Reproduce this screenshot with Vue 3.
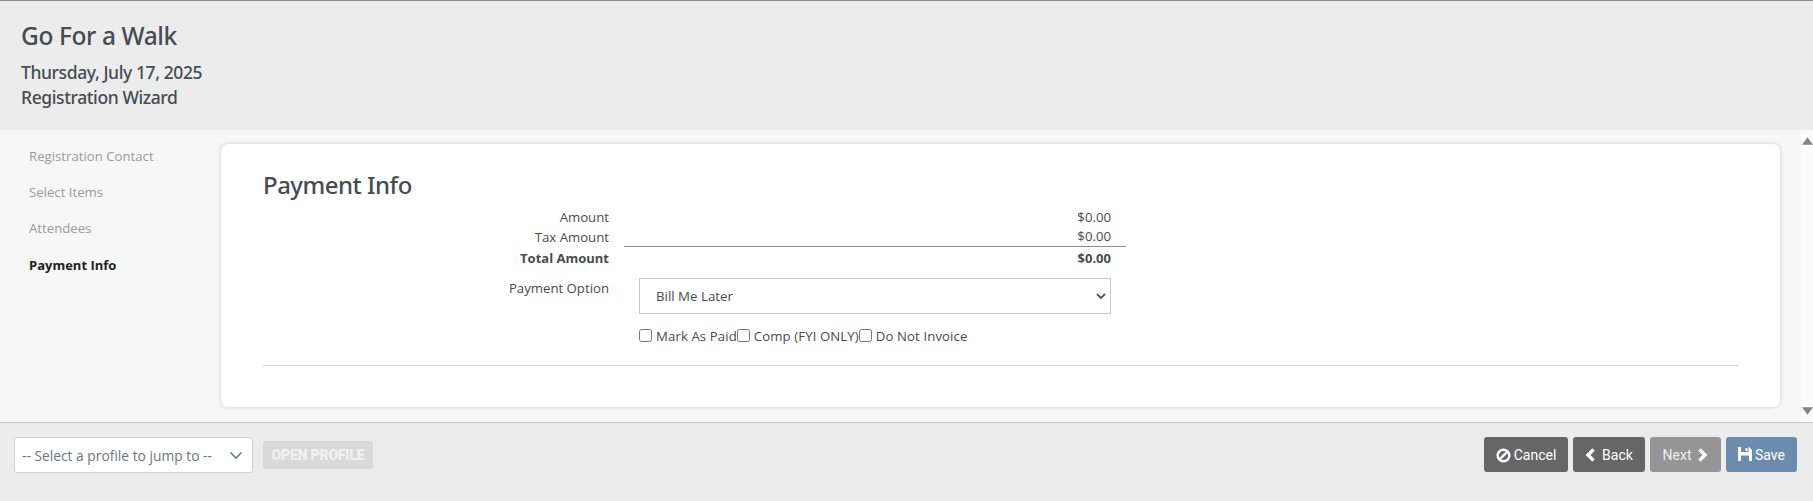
<script setup>
const steps = [
  { label: 'Registration Contact', active: false },
  { label: 'Select Items', active: false },
  { label: 'Attendees', active: false },
  { label: 'Payment Info', active: true }
]
const amounts = [
  { label: 'Amount', value: '$0.00' },
  { label: 'Tax Amount', value: '$0.00', ruled: true },
  { label: 'Total Amount', value: '$0.00', total: true }
]
const checks = ['Mark As Paid', 'Comp (FYI ONLY)', 'Do Not Invoice']
</script>

<template>
  <div class="page">
    <header class="head">
      <h1>Go For a Walk</h1>
      <h2>Thursday, July 17, 2025</h2>
      <h2>Registration Wizard</h2>
    </header>
    <div class="middle">
      <nav class="steps">
        <div v-for="s in steps" :key="s.label" class="step" :class="{ active: s.active }">{{ s.label }}</div>
      </nav>
      <main class="card">
        <h3>Payment Info</h3>
        <div v-for="a in amounts" :key="a.label" class="row" :class="{ total: a.total }">
          <div class="lab">{{ a.label }}</div>
          <div class="val" :class="{ ruled: a.ruled }">{{ a.value }}</div>
        </div>
        <div class="row option">
          <div class="lab">Payment Option</div>
          <div class="fake-wrap">
            <select class="pay"><option>Bill Me Later</option></select>
          </div>
        </div>
        <div class="row checks-row">
          <div class="lab"></div>
          <div class="checks">
            <label v-for="c in checks" :key="c"><input type="checkbox" /><span>{{ c }}</span></label>
          </div>
        </div>
        <hr />
      </main>
      <div class="scroll">
        <svg width="11" height="8" viewBox="0 0 10 7"><path d="M5 0l5 7H0z" fill="#848484" /></svg>
        <svg width="11" height="8" viewBox="0 0 10 7"><path d="M0 0h10L5 7z" fill="#848484" /></svg>
      </div>
    </div>
    <footer class="foot">
      <div class="jump">
        <div class="jump-sel">
          <span>-- Select a profile to jump to --</span>
          <svg width="14" height="9" viewBox="0 0 14 9"><path d="M1.500 1.500L7 7l5.500-5.500" fill="none" stroke="#5c6670" stroke-width="1.300" /></svg>
        </div>
        <button class="open">OPEN PROFILE</button>
      </div>
      <div class="actions">
        <button class="btn dark">
          <svg width="15" height="15" viewBox="0 0 16 16"><circle cx="8" cy="8" r="6.200" fill="none" stroke="#fff" stroke-width="2.600" /><path d="M3.800 12.200L12.200 3.800" stroke="#fff" stroke-width="2.600" /></svg>
          <span>Cancel</span>
        </button>
        <button class="btn dark">
          <svg width="11" height="14" viewBox="0 0 11 14"><path d="M8.500 1.500L3 7l5.500 5.500" fill="none" stroke="#fff" stroke-width="3.400" /></svg>
          <span>Back</span>
        </button>
        <button class="btn grey">
          <span>Next</span>
          <svg width="11" height="14" viewBox="0 0 11 14"><path d="M2.500 1.500L8 7l-5.500 5.500" fill="none" stroke="#fff" stroke-width="3.400" /></svg>
        </button>
        <button class="btn blue">
          <svg class="disk" width="14" height="14" viewBox="0 0 14 14"><path fill-rule="evenodd" d="M0 0h11l3 3v11H0zM3 0v5h7.500V0zM7.500 1h2v3h-2zM3 8.500V14h8V8.500z" fill="#fff" /></svg>
          <span>Save</span>
        </button>
      </div>
    </footer>
  </div>
</template>

<style>
html, body { margin: 0; background: #ececec; }
</style>

<style scoped>
.page {
  width: 1813px;
  height: 501px;
  display: flex;
  flex-direction: column;
  font-family: "Open Sans", "Noto Sans", sans-serif;
  color: #454c53;
  overflow: hidden;
}
.head {
  height: 129px;
  flex: none;
  background: #ececec;
  border-top: 1px solid #8a8a8a;
  padding: 0 21px;
}
h1 {
  margin: 18px 0 0;
  font-family: "Noto Sans", sans-serif;
  font-size: 24.500px;
  line-height: 34px;
  font-weight: 500;
  letter-spacing: -0.4px;
}
h2 {
  margin: 0;
  font-family: "Noto Sans", sans-serif;
  font-size: 17.500px;
  line-height: 25px;
  font-weight: 500;
  letter-spacing: -0.4px;
}
h1 + h2 { margin-top: 7px; }
.middle {
  height: 292px;
  flex: none;
  display: flex;
  background: #f7f7f7;
}
.steps {
  width: 221px;
  flex: none;
  padding: 8px 0 0 29px;
  box-sizing: border-box;
}
.step {
  height: 36.200px;
  line-height: 36px;
  font-size: 13.200px;
  color: #9a9a9a;
}
.step.active { color: #222; font-weight: 700; font-size: 13px; }
.card {
  width: 1559px;
  height: 263px;
  margin-top: 14px;
  flex: none;
  background: #fff;
  border-radius: 7px;
  box-shadow: 0 0 4px rgba(0, 0, 0, .18);
  padding: 25px 42px 0 42px;
  box-sizing: border-box;
}
h3 {
  margin: 0 0 6px;
  font-family: "Noto Sans", sans-serif;
  font-size: 24px;
  line-height: 32px;
  font-weight: 500;
  letter-spacing: -0.5px;
}
.row {
  display: grid;
  grid-template-columns: 346px 502px;
  column-gap: 15px;
  font-size: 13.200px;
  line-height: 20px;
}
.lab { text-align: right; }
.val { text-align: right; padding-right: 15px; }
.ruled { border-bottom: 1px solid #8f8f8f; height: 20px; line-height: 19px; box-sizing: border-box; }
.total { font-weight: 700; font-size: 13px; margin-top: 1px; }
.option { margin-top: 10px; }
.fake-wrap { padding-left: 15px; }
.pay {
  display: block;
  width: 472px;
  height: 36px;
  border: 1px solid #c9c9c9;
  color: #454c53;
  font: 13.300px "Open Sans", sans-serif;
  padding: 0 16px;
  border-radius: 0;
  appearance: none;
  background: #fff url("data:image/svg+xml,%3Csvg xmlns='http://www.w3.org/2000/svg' width='10' height='6' viewBox='0 0 10 6'%3E%3Cpath d='M1 1l4 4 4-4' fill='none' stroke='%23555' stroke-width='1.800'/%3E%3C/svg%3E") no-repeat right 4px center;
}
.checks-row { margin-top: 12px; }
.checks { display: flex; padding-left: 15px; letter-spacing: 0.1px; }
.checks label { display: flex; align-items: center; }
.checks input { margin: -2px 4px 0 0; width: 13px; height: 13px; }
hr {
  border: 0;
  border-top: 1px solid #d2d2d2;
  margin: 19px 0 0;
}
.scroll {
  width: 12px;
  margin-left: auto;
  background: #fbfbfb;
  display: flex;
  flex-direction: column;
  justify-content: space-between;
  align-items: center;
  padding: 7px 0 7px;
  box-sizing: border-box;
}
.foot {
  flex: 1;
  background: #ececec;
  border-top: 1px solid #c4c4c4;
  display: flex;
  justify-content: space-between;
  align-items: flex-start;
  padding: 14px 16px 0 14px;
}
.jump { display: flex; align-items: center; gap: 10px; }
.jump-sel {
  width: 239px;
  height: 36px;
  box-sizing: border-box;
  border: 1px solid #ced4da;
  border-radius: 3px;
  background: #fff;
  display: flex;
  align-items: center;
  justify-content: space-between;
  padding: 0 9px 0 7px;
  font-size: 13.800px;
  color: #6c757d;
}
.open {
  width: 110px;
  height: 28px;
  border: 0;
  border-radius: 3px;
  background: #d9d9d9;
  color: #f1f1f1;
  font: 900 14px Roboto, sans-serif;
  letter-spacing: -0.2px;
  padding: 0;
}
.actions { display: flex; gap: 5px; }
.btn {
  height: 35px;
  border: 0;
  border-radius: 3px;
  color: #fff;
  font: 400 14px Roboto, sans-serif;
  display: inline-flex;
  align-items: center;
  justify-content: center;
  gap: 3px;
  padding: 1px 0 0;
}
.dark { background: #666; }
.dark:first-child { width: 84px; }
.dark:nth-child(2) { width: 72px; gap: 6px; }
.grey { background: #959595; width: 71px; gap: 6px; color: #f0f0f0; }
.blue { background: #6b8cad; width: 71px; }
.disk { margin-top: -3px; }
</style>
